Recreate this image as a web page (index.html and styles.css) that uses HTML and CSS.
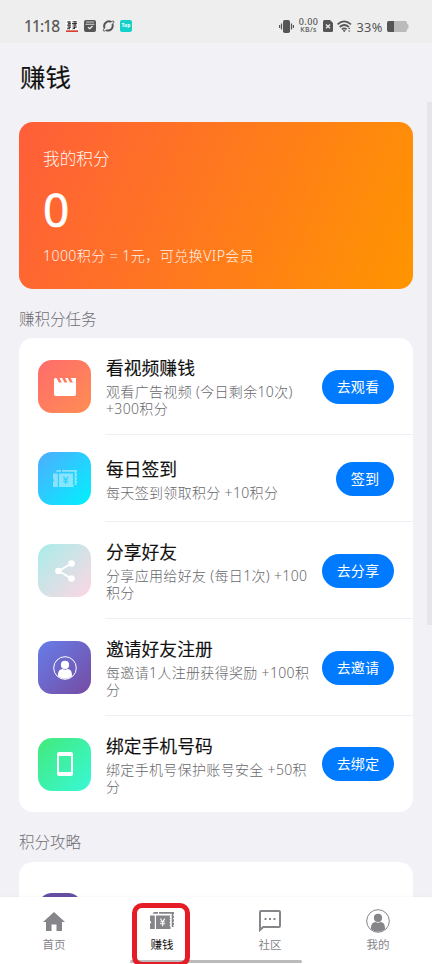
FILE: index.html
```html
<!DOCTYPE html>
<html lang="zh-CN">
<head>
<meta charset="utf-8">
<meta name="viewport" content="width=device-width, initial-scale=1">
<title>赚钱</title>
<link rel="stylesheet" href="styles.css">
</head>
<body>
<svg class="defs" width="0" height="0">
  <symbol id="ticket" viewBox="0 0 24 18">
    <path d="M4 0h4v1.700H2.600z"/>
    <path d="M9 0h15v2.100l-1.200.9 1.200.9v1.800l-1.200.9 1.200.9v1.800l-1.200.9 1.200.9v1.800l-1.200.9 1.200.9V15h-2.300V1.700H9z"/>
    <path d="M0 3.500h4.800V17H0v-5l1.300-1.700L0 8.500z"/>
    <path fill-rule="evenodd" d="M6 3.500h14.500l-1 1.400 1 1.400-1 1.400 1 1.400-1 1.400 1 1.400-1 1.400 1 1.400V17H6z M9.800 6.500l1.900 2.900h-1.600v.9h2v1h-2v.9h2v2h1.100v-2h2v-.9h-2v-1h2v-.9h-1.600l1.900-2.900h-1.300l-1.600 2.500-1.500-2.500z"/>
  </symbol>
  <symbol id="person" viewBox="0 0 24 24">
    <circle cx="12" cy="12" r="11.300" fill="none" stroke="currentColor" stroke-width="1"/>
    <circle cx="12" cy="8.900" r="4.100"/>
    <path d="M5 20.300c-.2-5 1.700-7.100 4.600-7.300 1.600 1 3.200 1 4.800 0 2.900.2 4.800 2.300 4.600 7.300-4 3.200-10 3.200-14 0z"/>
  </symbol>
</svg>

<header class="status">
  <span class="clock">11:18</span>
  <svg class="app-news" viewBox="0 0 12 12"><path fill="#fff" d="M0 0h12v12H0z"/><path d="M1 2h4M2 3.700h3M1 5.200h4M3 1.200v4.500M6.500 1.800h4.500M6 3.500h5M6.500 5h4M9 1v5M1.500 7h3.500M3.200 6.500v3M1 9l3.500-1.500M6.500 7H11M8.500 6.500v2.700M6.500 9l3-1.500" stroke="#222" stroke-width=".9" fill="none"/><path fill="#d44334" d="M0 10.300h12V12H0z"/></svg>
  <svg class="app-box" viewBox="0 0 12 12"><rect width="12" height="12" rx="2"/><path d="M2 2h8M1.500 4.300h9" stroke="#eee" stroke-width=".8"/><path d="M4 7.200l1.800 1.500L8.500 6" fill="none" stroke="#eee" stroke-width="1.300"/></svg>
  <svg class="app-orbit" viewBox="0 0 13 12"><path fill="none" stroke="currentColor" stroke-width="2" d="M2.600 8A4.700 4.700 0 0 1 9 1.900M10.400 4.200A4.700 4.700 0 0 1 4.300 10.200"/><path fill="none" stroke="currentColor" stroke-width="1" d="M2.600 8C.3 10.800 1.200 12 4.300 10.200M9 1.900C12 .3 13 1 10.400 4.200"/></svg>
  <span class="app-top">Top</span>
  <span class="spacer"></span>
  <svg class="vibrate" viewBox="0 0 15 13"><rect x="4" width="7" height="13" rx="1.800"/><path d="M2.500 3.500v6M.6 5v3M12.500 3.500v6M14.400 5v3" stroke="currentColor" stroke-width="1.200"/></svg>
  <span class="speed"><b>0.00</b><i>KB/s</i></span>
  <svg class="sim" viewBox="0 0 10 12"><path d="M1.500 0H7l3 3v7.500Q10 12 8.500 12h-7Q0 12 0 10.500v-9Q0 0 1.500 0z"/><path d="M3 4.500l4 3.700M7 4.500L3 8.200" stroke="#eee" stroke-width="1.300"/></svg>
  <svg class="wifi" viewBox="0 0 15 13"><path fill="none" stroke="currentColor" stroke-width="1.700" d="M.5 4.400q6.500-6 13.500 0M2.700 7q4.600-4 9.200 0M4.900 9.300q2.400-2 4.700 0"/><path d="M5.700 10.500q1.500-1 3 0L7.200 12.300zM11 9l1.200-1.500L13.400 9zM11 10.500h2.400l-1.200 1.600z"/></svg>
  <span class="percent">33%</span>
  <svg class="battery" viewBox="0 0 22 11"><path fill="#bbb" d="M2 0h16.500Q20 0 20 2v.8l1.500 1v3.400L20 8.200V9q0 2-1.500 2H2Q0 11 0 9V2Q0 0 2 0z"/><path d="M2 0h5v11H2Q0 11 0 9V2Q0 0 2 0z"/></svg>
</header>

<main class="page">
  <h1>赚钱</h1>
  <section class="points">
    <div class="points-label">我的积分</div>
    <div class="points-value">0</div>
    <div class="points-note">1000积分 = 1元，可兑换VIP会员</div>
  </section>

  <h2>赚积分任务</h2>
  <section class="tasks">
    <article class="task">
      <div class="tile video"><svg class="clap" viewBox="0 0 22 18"><path d="M1.500 0h1l2.300 4.600h3L5.500 0h2.600l2.300 4.600h3L11.100 0h2.600L16 4.600h3L16.700 0H22v16.200q0 1.800-1.800 1.800H1.800Q0 18 0 16.200V1.500Q0 0 1.500 0z"/></svg></div>
      <div class="body"><h3>看视频赚钱</h3><p>观看广告视频 (今日剩余10次)<br>+300积分</p></div>
      <button>去观看</button>
    </article>
    <article class="task short">
      <div class="tile sign"><svg class="ticket"><use href="#ticket"/></svg></div>
      <div class="body"><h3>每日签到</h3><p>每天签到领取积分 +10积分</p></div>
      <button>签到</button>
    </article>
    <article class="task">
      <div class="tile share"><svg class="share-icon" viewBox="0 0 20 22"><path d="M16 3.500L4 11l12 7.500" fill="none" stroke="currentColor" stroke-width="2"/><circle cx="16.500" cy="3.500" r="3.300"/><circle cx="3.500" cy="11" r="3.300"/><circle cx="16.500" cy="18.500" r="3.300"/></svg></div>
      <div class="body"><h3>分享好友</h3><p>分享应用给好友 (每日1次) +100<br>积分</p></div>
      <button>去分享</button>
    </article>
    <article class="task">
      <div class="tile invite"><svg class="person"><use href="#person"/></svg></div>
      <div class="body"><h3>邀请好友注册</h3><p>每邀请1人注册获得奖励 +100积<br>分</p></div>
      <button>去邀请</button>
    </article>
    <article class="task">
      <div class="tile bind"><svg class="phone" viewBox="0 0 16 24"><path fill-rule="evenodd" d="M2 0h12q2 0 2 2v20q0 2-2 2H2q-2 0-2-2V2Q0 0 2 0zm0 4v16h12V4z"/></svg></div>
      <div class="body"><h3>绑定手机号码</h3><p>绑定手机号保护账号安全 +50积<br>分</p></div>
      <button>去绑定</button>
    </article>
  </section>

  <h2 class="guide-heading">积分攻略</h2>
  <section class="guide"><div class="guide-icon"></div></section>
  <div class="scrollbar"></div>
</main>

<nav class="tabs">
  <a class="tab"><svg class="home" viewBox="0 0 22 19"><path d="M11 0l11 10h-3v9h-5.500v-6.500h-5V19H3v-9H0z"/></svg><span>首页</span></a>
  <a class="tab active"><svg class="ticket"><use href="#ticket"/></svg><span>赚钱</span></a>
  <a class="tab"><svg class="chat" viewBox="0 0 22 22"><path fill="none" stroke="currentColor" stroke-width="2" d="M1 20V2q0-1 1-1h18q1 0 1 1v14q0 1-1 1H4.200z"/><path d="M5.500 8h2v2h-2zM10 8h2v2h-2zM14.500 8h2v2h-2z"/></svg><span>社区</span></a>
  <a class="tab"><svg class="person"><use href="#person"/></svg><span>我的</span></a>
  <div class="home-bar"></div>
  <div class="marker"></div>
</nav>
</body>
</html>
```
FILE: styles.css
```css
* { box-sizing: border-box; }
body {
  margin: 0;
  height: 964px;
  overflow: hidden;
  display: flex;
  flex-direction: column;
  background: #f2f1f6;
  color: #111;
  font-family: "Noto Sans", "Noto Sans CJK SC", sans-serif;
}
svg { display: block; fill: currentColor; flex: none; }
.defs { position: absolute; }
h1, h2, h3, p { margin: 0; font-weight: 400; }

.status {
  flex: none;
  height: 43px;
  padding: 9px 24px 0;
  display: flex;
  align-items: center;
  background: #eee;
  color: #555;
}
.clock { width: 42px; font-size: 15.500px; letter-spacing: -.9px; white-space: nowrap; -webkit-text-stroke: .2px; }
.app-news { width: 12px; height: 12px; }
.app-box { width: 12px; height: 12px; margin-left: 6px; }
.app-orbit { width: 13px; height: 12px; margin-left: 6px; }
.app-top {
  width: 12px; height: 12px; margin-left: 5px;
  border-radius: 2px;
  background: #13d0c8; color: #fff;
  font-size: 5px; line-height: 11px; font-weight: 700; text-align: center;
}
.spacer { flex: 1; }
.vibrate { width: 15px; height: 13px; }
.speed { width: 21px; margin-left: 4px; text-align: center; display: flex; flex-direction: column; align-items: center; }
.speed b, .speed i { font-style: normal; font-weight: 500; white-space: nowrap; }
.speed b { font-size: 9px; line-height: 8px; letter-spacing: .4px; }
.speed i { font-size: 7px; line-height: 8px; letter-spacing: .3px; }
.sim { width: 10px; height: 12px; margin-left: 4px; }
.wifi { width: 15px; height: 13px; margin-left: 4px; }
.percent { width: 35px; font-size: 12.800px; line-height: 18px; text-align: center; margin-top: 2px; letter-spacing: .3px; }
.battery { width: 22px; height: 11px; margin-right: -1px; }

.page {
  position: relative;
  flex: 1;
  min-height: 0;
  overflow: hidden;
  padding: 14px 19px 0;
}
h1 { height: 65px; padding-left: 1px; font-size: 25.500px; line-height: 40px; -webkit-text-stroke: .15px; }

.points {
  height: 167px;
  padding: 24px;
  border-radius: 14px;
  color: #fff;
  background: linear-gradient(113deg, #ff5e3a, #ff9500);
}
.points-label { font-size: 16.700px; line-height: 25px; opacity: .95; font-weight: 300; }
.points-value { margin-top: 11px; font-size: 46px; line-height: 54px; font-weight: 400; -webkit-text-stroke: .6px; }
.points-note { margin-top: 9px; font-size: 14.100px; line-height: 22px; letter-spacing: .4px; font-weight: 300; opacity: .9; white-space: nowrap; }

h2 { padding: 18px 0 7px; font-size: 15.500px; line-height: 24px; font-weight: 300; color: #6e6e73; }
.guide-heading { padding-bottom: 8px; }

.tasks { border-radius: 14px; background: #fff; }
.task {
  position: relative;
  height: 97px;
  padding: 0 19px;
  display: flex;
  align-items: center;
}
.task.short { height: 87px; }
.task:last-child { height: 96px; }
.task + .task::before {
  content: "";
  position: absolute;
  top: -1px; left: 86px; right: 0;
  height: 1px;
  background: #f0f0f2;
}
.tile {
  flex: none;
  width: 53px; height: 53px;
  display: grid;
  place-items: center;
  border-radius: 14px;
  color: #fff;
}
.video { background: linear-gradient(135deg, #ff6b6b, #ff8e53); }
.sign { background: linear-gradient(135deg, #4facfe, #00f2fe); }
.sign svg { opacity: .45; }
.share { background: linear-gradient(135deg, #a8edea, #fed6e3); }
.invite { background: linear-gradient(135deg, #667eea, #764ba2); }
.bind { background: linear-gradient(135deg, #43e97b, #38f9d7); }
.clap { width: 22px; height: 18px; }
.ticket { width: 24px; height: 18px; }
.share-icon { width: 20px; height: 22px; }
.person { width: 24px; height: 24px; }
.phone { width: 16px; height: 24px; }
.body { flex: 1; min-width: 0; margin-left: 15px; white-space: nowrap; }
h3 { font-size: 17.800px; line-height: 24px; -webkit-text-stroke: .15px; }
p { margin-top: 3px; font-size: 14px; line-height: 17px; letter-spacing: .33px; font-weight: 300; color: #68686d; }
button {
  flex: none;
  height: 34px;
  padding: 0 15px;
  border: 0;
  border-radius: 17px;
  background: #007aff;
  color: #fff;
  font: 14.100px/34px "Noto Sans", "Noto Sans CJK SC", sans-serif;
}

.guide { height: 120px; padding: 31px 19px; border-radius: 14px; background: #fff; }
.guide-icon { width: 44px; height: 44px; border-radius: 14px; background: #654ea3; }
.scrollbar { position: absolute; top: 59px; right: 0; width: 5px; height: 523px; background: #e6e5ea; }

.tabs {
  position: relative;
  flex: none;
  height: 67px;
  display: grid;
  grid-template-columns: repeat(4, 1fr);
  background: #fff;
  box-shadow: 0 -1px 2px rgba(0, 0, 0, .03);
}
.tab { display: grid; grid-template-rows: 48px 18px; justify-items: center; color: #85858a; }
.tab svg { align-self: center; }
.tab span { margin-top: -9px; font-size: 11.500px; line-height: 18px; }
.tab.active span { color: #111; }
.home { width: 22px; height: 19px; }
.chat { width: 22px; height: 22px; }
.home-bar { position: absolute; left: 130px; top: 63px; width: 172px; height: 3px; border-radius: 2px; background: #bbb; }
.marker { position: absolute; left: 132px; top: 6px; width: 58px; height: 64px; border: 5px solid #e51c25; border-radius: 10px; }
```
